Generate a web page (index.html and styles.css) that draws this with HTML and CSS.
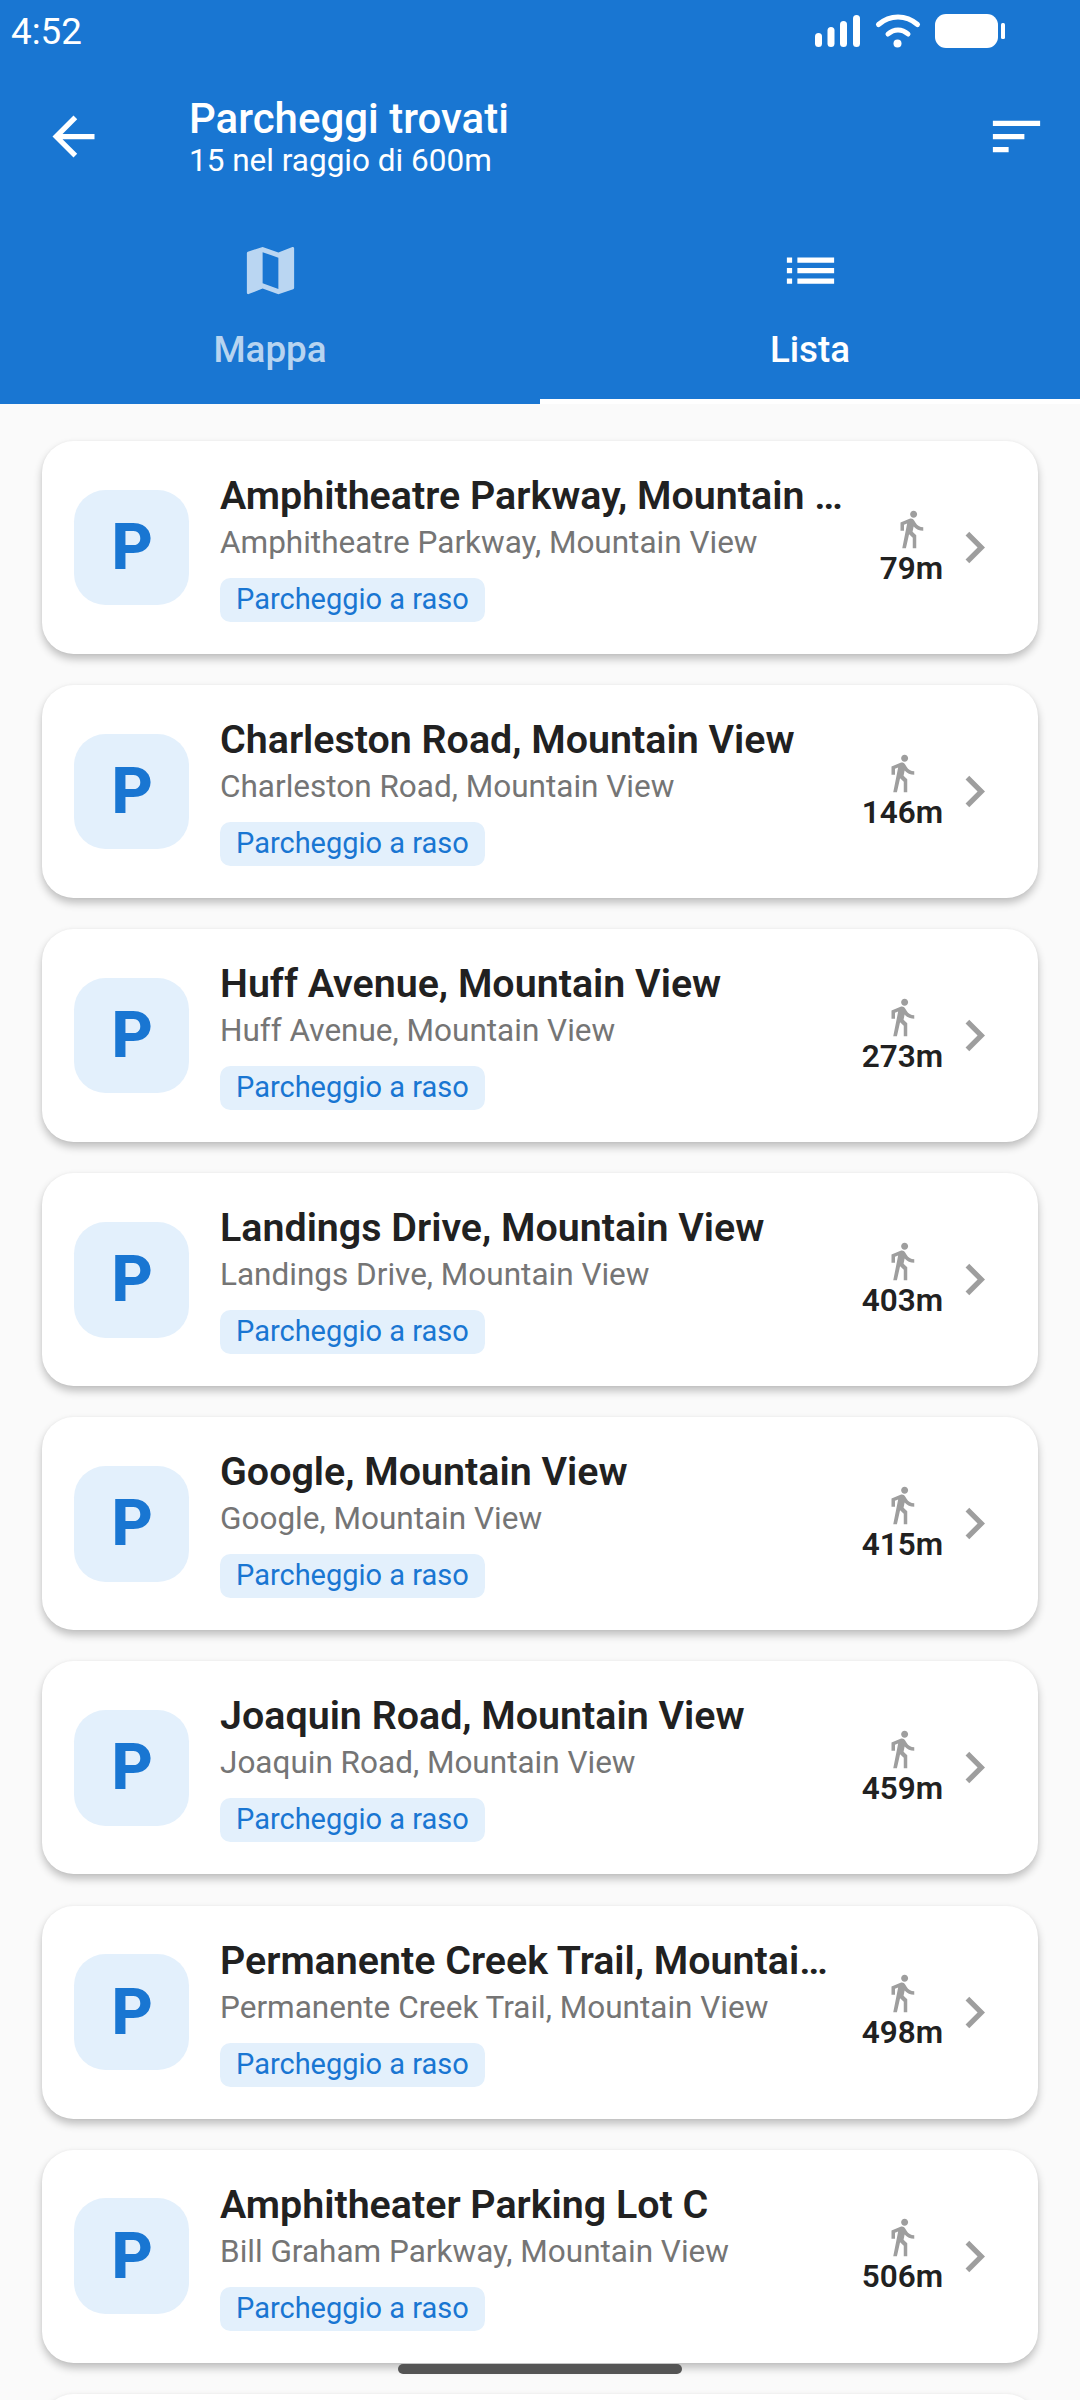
FILE: index.html
```html
<!DOCTYPE html>
<html lang="it">
<head>
<meta charset="utf-8">
<title>Parcheggi trovati</title>
<link rel="stylesheet" href="styles.css">
</head>
<body>
<div class="screen">
  <header class="header">
    <div class="status">
      <span class="time">4:52</span>
      <svg class="status-icons" width="190" height="36" viewBox="815 14 190 36">
        <rect x="815" y="33" width="7" height="14" rx="3.5" fill="#fff"/>
        <rect x="827.5" y="27" width="7" height="20" rx="3.5" fill="#fff"/>
        <rect x="840" y="21" width="7" height="26" rx="3.5" fill="#fff"/>
        <rect x="853" y="15" width="7" height="32" rx="3.5" fill="#fff"/>
        <path d="M878.5 24.5C890 14.5 906 14.5 917.5 24.5" fill="none" stroke="#fff" stroke-width="5" stroke-linecap="round"/>
        <path d="M888 34C894 28.5 902 28.5 908 34" fill="none" stroke="#fff" stroke-width="5" stroke-linecap="round"/>
        <circle cx="897.5" cy="43.5" r="4" fill="#fff"/>
        <rect x="935" y="14" width="63" height="34" rx="11" fill="#fff"/>
        <rect x="1001" y="23" width="4" height="16" rx="1.5" fill="#fff"/>
      </svg>
    </div>
    <div class="appbar">
      <svg class="icon-63" viewBox="0 0 24 24"><path d="M20 11H7.83l5.59-5.59L12 4l-8 8 8 8 1.41-1.41L7.83 13H20v-2z"/></svg>
      <div class="appbar-text">
        <div class="appbar-title">Parcheggi trovati</div>
        <div class="appbar-sub">15 nel raggio di 600m</div>
      </div>
      <svg class="icon-63" viewBox="0 0 24 24"><path d="M3 18h6v-2H3v2zM3 6v2h18V6H3zm0 7h12v-2H3v2z"/></svg>
    </div>
    <nav class="tabs">
      <div class="tab">
        <svg class="icon-63" viewBox="0 0 24 24"><path d="M20.5 3l-.16.03L15 5.1 9 3 3.36 4.9c-.21.07-.36.25-.36.48V20.5c0 .28.22.5.5.5l.16-.03L9 18.9l6 2.1 5.64-1.9c.21-.07.36-.25.36-.48V3.5c0-.28-.22-.5-.5-.5zM15 19l-6-2.11V5l6 2.11V19z"/></svg>
        <span class="tab-label">Mappa</span>
      </div>
      <div class="tab tab-active">
        <svg class="icon-63" viewBox="0 0 24 24"><path d="M3 13h2v-2H3v2zm0 4h2v-2H3v2zm0-8h2V7H3v2zm4 4h14v-2H7v2zm0 4h14v-2H7v2zM7 7v2h14V7H7z"/></svg>
        <span class="tab-label">Lista</span>
      </div>
    </nav>
  </header>

  <main class="list">
    <article class="card">
      <div class="badge">P</div>
      <div class="info">
        <div class="name">Amphitheatre Parkway, Mountain …</div>
        <div class="addr">Amphitheatre Parkway, Mountain View</div>
        <span class="chip">Parcheggio a raso</span>
      </div>
      <div class="dist">
        <svg class="walk" viewBox="0 0 24 24"><path d="M13.5 5.5c1.1 0 2-.9 2-2s-.9-2-2-2-2 .9-2 2 .9 2 2 2zM9.8 8.9L7 23h2.1l1.8-8 2.1 2v6h2v-7.5l-2.1-2 .6-3C14.8 12 16.8 13 19 13v-2c-1.9 0-3.5-1-4.3-2.4l-1-1.6c-.4-.6-1-1-1.7-1-.3 0-.5.1-.8.1L6 8.3V13h2V9.6l1.8-.7"/></svg>
        <span class="meters">79m</span>
      </div>
      <svg class="chev" viewBox="0 0 24 24"><path d="M10 6L8.59 7.41 13.17 12l-4.58 4.59L10 18l6-6z"/></svg>
    </article>
    <article class="card">
      <div class="badge">P</div>
      <div class="info">
        <div class="name">Charleston Road, Mountain View</div>
        <div class="addr">Charleston Road, Mountain View</div>
        <span class="chip">Parcheggio a raso</span>
      </div>
      <div class="dist">
        <svg class="walk" viewBox="0 0 24 24"><path d="M13.5 5.5c1.1 0 2-.9 2-2s-.9-2-2-2-2 .9-2 2 .9 2 2 2zM9.8 8.9L7 23h2.1l1.8-8 2.1 2v6h2v-7.5l-2.1-2 .6-3C14.8 12 16.8 13 19 13v-2c-1.9 0-3.5-1-4.3-2.4l-1-1.6c-.4-.6-1-1-1.7-1-.3 0-.5.1-.8.1L6 8.3V13h2V9.6l1.8-.7"/></svg>
        <span class="meters">146m</span>
      </div>
      <svg class="chev" viewBox="0 0 24 24"><path d="M10 6L8.59 7.41 13.17 12l-4.58 4.59L10 18l6-6z"/></svg>
    </article>
    <article class="card">
      <div class="badge">P</div>
      <div class="info">
        <div class="name">Huff Avenue, Mountain View</div>
        <div class="addr">Huff Avenue, Mountain View</div>
        <span class="chip">Parcheggio a raso</span>
      </div>
      <div class="dist">
        <svg class="walk" viewBox="0 0 24 24"><path d="M13.5 5.5c1.1 0 2-.9 2-2s-.9-2-2-2-2 .9-2 2 .9 2 2 2zM9.8 8.9L7 23h2.1l1.8-8 2.1 2v6h2v-7.5l-2.1-2 .6-3C14.8 12 16.8 13 19 13v-2c-1.9 0-3.5-1-4.3-2.4l-1-1.6c-.4-.6-1-1-1.7-1-.3 0-.5.1-.8.1L6 8.3V13h2V9.6l1.8-.7"/></svg>
        <span class="meters">273m</span>
      </div>
      <svg class="chev" viewBox="0 0 24 24"><path d="M10 6L8.59 7.41 13.17 12l-4.58 4.59L10 18l6-6z"/></svg>
    </article>
    <article class="card">
      <div class="badge">P</div>
      <div class="info">
        <div class="name">Landings Drive, Mountain View</div>
        <div class="addr">Landings Drive, Mountain View</div>
        <span class="chip">Parcheggio a raso</span>
      </div>
      <div class="dist">
        <svg class="walk" viewBox="0 0 24 24"><path d="M13.5 5.5c1.1 0 2-.9 2-2s-.9-2-2-2-2 .9-2 2 .9 2 2 2zM9.8 8.9L7 23h2.1l1.8-8 2.1 2v6h2v-7.5l-2.1-2 .6-3C14.8 12 16.8 13 19 13v-2c-1.9 0-3.5-1-4.3-2.4l-1-1.6c-.4-.6-1-1-1.7-1-.3 0-.5.1-.8.1L6 8.3V13h2V9.6l1.8-.7"/></svg>
        <span class="meters">403m</span>
      </div>
      <svg class="chev" viewBox="0 0 24 24"><path d="M10 6L8.59 7.41 13.17 12l-4.58 4.59L10 18l6-6z"/></svg>
    </article>
    <article class="card">
      <div class="badge">P</div>
      <div class="info">
        <div class="name">Google, Mountain View</div>
        <div class="addr">Google, Mountain View</div>
        <span class="chip">Parcheggio a raso</span>
      </div>
      <div class="dist">
        <svg class="walk" viewBox="0 0 24 24"><path d="M13.5 5.5c1.1 0 2-.9 2-2s-.9-2-2-2-2 .9-2 2 .9 2 2 2zM9.8 8.9L7 23h2.1l1.8-8 2.1 2v6h2v-7.5l-2.1-2 .6-3C14.8 12 16.8 13 19 13v-2c-1.9 0-3.5-1-4.3-2.4l-1-1.6c-.4-.6-1-1-1.7-1-.3 0-.5.1-.8.1L6 8.3V13h2V9.6l1.8-.7"/></svg>
        <span class="meters">415m</span>
      </div>
      <svg class="chev" viewBox="0 0 24 24"><path d="M10 6L8.59 7.41 13.17 12l-4.58 4.59L10 18l6-6z"/></svg>
    </article>
    <article class="card">
      <div class="badge">P</div>
      <div class="info">
        <div class="name">Joaquin Road, Mountain View</div>
        <div class="addr">Joaquin Road, Mountain View</div>
        <span class="chip">Parcheggio a raso</span>
      </div>
      <div class="dist">
        <svg class="walk" viewBox="0 0 24 24"><path d="M13.5 5.5c1.1 0 2-.9 2-2s-.9-2-2-2-2 .9-2 2 .9 2 2 2zM9.8 8.9L7 23h2.1l1.8-8 2.1 2v6h2v-7.5l-2.1-2 .6-3C14.8 12 16.8 13 19 13v-2c-1.9 0-3.5-1-4.3-2.4l-1-1.6c-.4-.6-1-1-1.7-1-.3 0-.5.1-.8.1L6 8.3V13h2V9.6l1.8-.7"/></svg>
        <span class="meters">459m</span>
      </div>
      <svg class="chev" viewBox="0 0 24 24"><path d="M10 6L8.59 7.41 13.17 12l-4.58 4.59L10 18l6-6z"/></svg>
    </article>
    <article class="card">
      <div class="badge">P</div>
      <div class="info">
        <div class="name">Permanente Creek Trail, Mountai…</div>
        <div class="addr">Permanente Creek Trail, Mountain View</div>
        <span class="chip">Parcheggio a raso</span>
      </div>
      <div class="dist">
        <svg class="walk" viewBox="0 0 24 24"><path d="M13.5 5.5c1.1 0 2-.9 2-2s-.9-2-2-2-2 .9-2 2 .9 2 2 2zM9.8 8.9L7 23h2.1l1.8-8 2.1 2v6h2v-7.5l-2.1-2 .6-3C14.8 12 16.8 13 19 13v-2c-1.9 0-3.5-1-4.3-2.4l-1-1.6c-.4-.6-1-1-1.7-1-.3 0-.5.1-.8.1L6 8.3V13h2V9.6l1.8-.7"/></svg>
        <span class="meters">498m</span>
      </div>
      <svg class="chev" viewBox="0 0 24 24"><path d="M10 6L8.59 7.41 13.17 12l-4.58 4.59L10 18l6-6z"/></svg>
    </article>
    <article class="card">
      <div class="badge">P</div>
      <div class="info">
        <div class="name">Amphitheater Parking Lot C</div>
        <div class="addr">Bill Graham Parkway, Mountain View</div>
        <span class="chip">Parcheggio a raso</span>
      </div>
      <div class="dist">
        <svg class="walk" viewBox="0 0 24 24"><path d="M13.5 5.5c1.1 0 2-.9 2-2s-.9-2-2-2-2 .9-2 2 .9 2 2 2zM9.8 8.9L7 23h2.1l1.8-8 2.1 2v6h2v-7.5l-2.1-2 .6-3C14.8 12 16.8 13 19 13v-2c-1.9 0-3.5-1-4.3-2.4l-1-1.6c-.4-.6-1-1-1.7-1-.3 0-.5.1-.8.1L6 8.3V13h2V9.6l1.8-.7"/></svg>
        <span class="meters">506m</span>
      </div>
      <svg class="chev" viewBox="0 0 24 24"><path d="M10 6L8.59 7.41 13.17 12l-4.58 4.59L10 18l6-6z"/></svg>
    </article>
    <article class="card card-empty"></article>
  </main>
  <div class="home-bar"></div>
</div>
</body>
</html>
```

FILE: styles.css
```css
* { box-sizing: border-box; margin: 0; padding: 0; }
html, body { width: 1080px; height: 2400px; overflow: hidden; }
body { font-family: Roboto, "Noto Sans", sans-serif; background: #fafafa; }
.screen { position: relative; width: 1080px; height: 2400px; overflow: hidden; display: flex; flex-direction: column; }

.header { background: #1976d2; color: #fff; height: 404px; flex: none; display: flex; flex-direction: column; }
.status { height: 63px; flex: none; display: flex; justify-content: space-between; padding: 14px 75px 0 11px; }
.time { font-size: 36.75px; line-height: 36px; }
.status-icons { display: block; }

.icon-63 { width: 63px; height: 63px; flex: none; fill: currentColor; display: block; }
.appbar { height: 147px; flex: none; display: flex; align-items: center; padding: 0 32px 0 42px; }
.appbar-text { flex: 1; margin-left: 84px; padding-top: 2px; }
.appbar-title { font-size: 42px; line-height: 47px; font-weight: 500; }
.appbar-sub { font-size: 31.5px; line-height: 38px; }

.tabs { height: 194px; flex: none; display: flex; }
.tab { flex: 1; display: flex; flex-direction: column; align-items: center; padding-top: 29px; color: rgba(255,255,255,.7); }
.tab-active { color: #fff; border-bottom: 5px solid #fff; }
.tab-label { font-size: 36.75px; line-height: 44px; font-weight: 500; margin-top: 26px; }

.list { display: flex; flex-direction: column; gap: 31.1px; padding: 37px 42px 0; }
.card { flex: none; height: 213px; background: #fff; border-radius: 31.5px; display: flex; align-items: center; padding: 0 32px 0 31.5px; box-shadow: 0 5px 8px rgba(0,0,0,.24), 0 0 3px rgba(0,0,0,.04); }
.badge { width: 115.5px; height: 115.5px; flex: none; border-radius: 31.5px; background: #e3f0fc; color: #1976d2; font-size: 64px; font-weight: 800; padding-left: 2px; display: flex; align-items: center; justify-content: center; }
.info { flex: 1; min-width: 0; margin-left: 31px; display: flex; flex-direction: column; align-items: flex-start; }
.name { font-size: 39.4px; line-height: 46px; font-weight: 570; color: #212121; white-space: nowrap; }
.addr { font-size: 31.5px; line-height: 40px; color: #757575; margin-top: 4px; white-space: nowrap; }
.chip { font-size: 29px; line-height: 37px; height: 44px; padding: 3px 16px 4px; margin-top: 15px; border-radius: 10.5px; background: #e3f0fc; color: #1976d2; }
.dist { flex: none; margin-left: 21px; display: flex; flex-direction: column; align-items: center; }
.walk { width: 42px; height: 42px; fill: #9e9e9e; display: block; }
.meters { font-size: 31.5px; line-height: 38px; font-weight: 570; color: #212121; }
.chev { width: 63px; height: 63px; flex: none; fill: #9e9e9e; display: block; }
.card-empty { height: 213px; }

.home-bar { position: absolute; left: 398px; top: 2364px; width: 284px; height: 10px; border-radius: 5px; background: #555; }
```
